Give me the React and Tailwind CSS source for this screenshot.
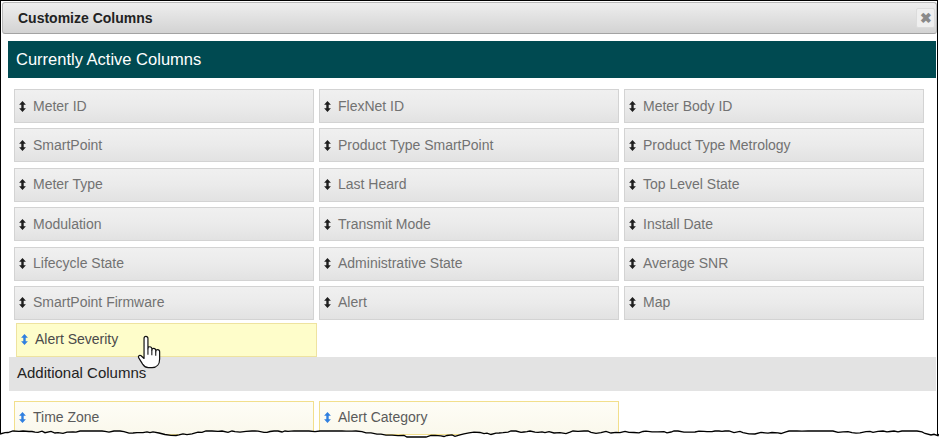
import React from "react";

const active = [
  "Meter ID", "FlexNet ID", "Meter Body ID",
  "SmartPoint", "Product Type SmartPoint", "Product Type Metrology",
  "Meter Type", "Last Heard", "Top Level State",
  "Modulation", "Transmit Mode", "Install Date",
  "Lifecycle State", "Administrative State", "Average SNR",
  "SmartPoint Firmware", "Alert", "Map",
];

function Arrow({ color = "#222" }) {
  return (
    <svg width="7" height="11" viewBox="0 0 7 11" className="shrink-0">
      <path d="M3.5 0 L6.9 3.8 H4.7 V7.2 H6.9 L3.5 11 L0.1 7.2 H2.3 V3.8 H0.1 Z" fill={color} />
    </svg>
  );
}

function Item({ label, variant = "gray", className = "" }) {
  const styles = {
    gray: "border-[#d3d3d3] bg-gradient-to-b from-[#f0f0f0] via-[#ebebeb] to-[#e2e2e2] text-[#727272]",
    drag: "border-[#eee3a0] bg-[#fefdca] text-[#4a4a4a]",
    add: "border-[#f2df8c] bg-gradient-to-b from-[#fefdf6] to-[#faf8ec] text-[#5a5a5a]",
  };
  return (
    <div className={`h-[34px] border flex items-center pl-[4px] gap-[7px] text-[14px] ${styles[variant]} ${className}`}>
      <Arrow color={variant === "gray" ? "#1e1e1e" : "#2f7fe0"} />
      <span className="leading-none pb-[1px]">{label}</span>
    </div>
  );
}

function Hand() {
  return (
    <svg width="26" height="35" viewBox="0 0 24 32" className="absolute left-[137px] top-[335px]">
      <path
        d="M6.5 3 a1.8 1.8 0 0 1 3.6 0 V12.5 a1.8 1.8 0 0 1 3.6 0 V14 a1.8 1.8 0 0 1 3.6 0 V15.2 a1.8 1.8 0 0 1 3.6 0 V22 c0 4.5 -2.5 8 -7 8 h-3.5 c-2.5 0 -3.8 -1.2 -5.2 -3.3 L1.6 21 c-0.9 -1.3 0.4 -3 1.9 -2.2 L6.5 21.5 Z"
        fill="#fff"
        stroke="#111"
        strokeWidth="1.1"
        strokeLinejoin="round"
      />
      <path d="M10.1 12.5 V18 M13.7 14 V18.5 M17.3 15.2 V19" stroke="#111" strokeWidth="1" />
    </svg>
  );
}

function Tear() {
  let seed = 7;
  const rnd = () => {
    seed = (seed * 9301 + 49297) % 233280;
    return seed / 233280;
  };
  const pts = [];
  let y = 434;
  for (let x = 0; x <= 939; x += 3 + Math.floor(rnd() * 4)) {
    y += (rnd() - 0.5) * 3.4;
    if (y < 431) y = 431;
    if (y > 437) y = 437;
    pts.push([x, y]);
  }
  pts.push([939, 434]);
  const line = pts.map((p, i) => `${i ? "L" : "M"}${p[0]} ${p[1].toFixed(1)}`).join(" ");
  return (
    <svg width="939" height="440" viewBox="0 0 939 440" className="absolute left-0 top-0 pointer-events-none">
      <path d={`${line} L939 440 L0 440 Z`} fill="#fff" />
      <path d={line} fill="none" stroke="#000" strokeWidth="1.3" />
    </svg>
  );
}

export default function App() {
  return (
    <div className="relative w-[939px] h-[440px] bg-white overflow-hidden" style={{ fontFamily: '"Liberation Sans", Arial, sans-serif' }}>
      <div className="w-[938px] h-[440px] border-l border-r border-t border-black flex flex-col">
        <div className="mt-[1px] ml-[1px] h-[32px] rounded-[3px] border border-[#b9b9b9] border-b-[#a3a3a3] bg-gradient-to-b from-[#eeeeee] to-[#d3d3d3] flex items-center justify-between pl-[15px] pr-[1px]">
          <span className="text-[14px] font-bold text-[#222]">Customize Columns</span>
          <div className="w-[19px] h-[20px] rounded-[2px] border border-[#dcdcdc] bg-[#efefef] flex items-center justify-center text-[#8a8a8a] text-[14px] font-bold leading-none">
            ✖
          </div>
        </div>
        <div className="pl-[7px] pr-[1px] flex flex-col">
          <div className="mt-[7px] h-[37px] bg-[#004a51] flex items-center pl-[8px] pb-[1px] text-white text-[16.5px]">
            Currently Active Columns
          </div>
          <div className="ml-[6px] mt-[11px] grid grid-cols-[300px_300px_300px] gap-x-[5px] gap-y-[5.4px]">
            {active.map((a) => (
              <Item key={a} label={a} />
            ))}
          </div>
          <Item label="Alert Severity" variant="drag" className="mt-[3px] ml-[8px] w-[301px]" />
          <div className="ml-[1px] h-[34px] bg-[#e3e3e3] flex items-center pl-[8px] pb-[2px] text-[15px] text-[#222]">
            Additional Columns
          </div>
          <div className="ml-[6px] mt-[10px] grid grid-cols-[300px_300px_300px] gap-x-[5px]">
            <Item label="Time Zone" variant="add" />
            <Item label="Alert Category" variant="add" />
          </div>
        </div>
      </div>
      <Hand />
      <Tear />
    </div>
  );
}
